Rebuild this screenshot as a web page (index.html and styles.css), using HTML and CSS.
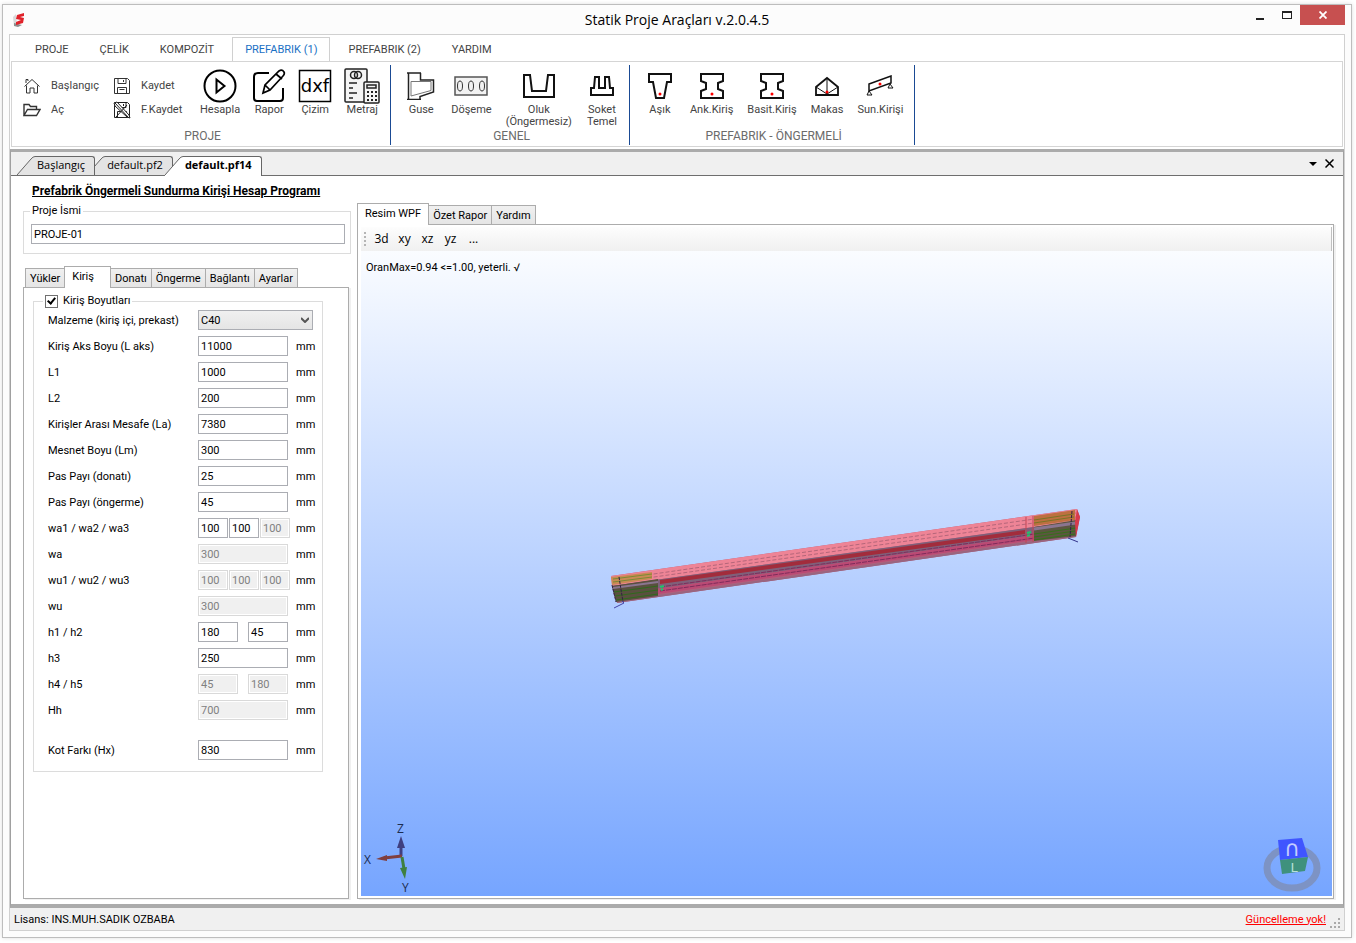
FILE: index.html
```html
<!DOCTYPE html>
<html lang="tr">
<head>
    <meta charset="UTF-8">
    <meta name="viewport" content="width=device-width, initial-scale=1.0">
    <title>Statik Proje Araçları v.2.0.4.5</title>
    <link rel="stylesheet" href="styles.css">
</head>
<body>
<div class="pencere">

    <!-- Başlık çubuğu -->
    <header class="baslik">
        <svg class="logo" width="16" height="16" viewBox="0 0 16 16">
            <path d="M1 5 L4 2 L5 13 L2 14 Z" fill="#d9d9d9"/>
            <path d="M2 11 L10 13 L6 15 L2 14 Z" fill="#8d8d8d"/>
            <path d="M12 1 L5 3 L4 7 L9 8 L4 10 L4 13 L11 11 L12 6 L8 5 L12 4 Z" fill="#e0222a"/>
        </svg>
        <h1>Statik Proje Araçları v.2.0.4.5</h1>
        <div class="pencere-dugmeleri">
            <button aria-label="Küçült"><svg width="10" height="10" viewBox="0 0 10 10"><path d="M1 8h8v2H1z" fill="#222"/></svg></button>
            <button aria-label="Ekranı kapla"><svg width="10" height="8" viewBox="0 0 10 8"><path d="M0 0h10v8H0zM1 2v5h8V2z" fill="#222" fill-rule="evenodd"/></svg></button>
            <button class="kapat" aria-label="Kapat"><svg width="8" height="8" viewBox="0 0 8 8"><path d="M.5.5l7 7M7.500.5l-7 7" stroke="#fff" stroke-width="1.800"/></svg></button>
        </div>
    </header>

    <div class="cerceve">

        <!-- Şerit menü -->
        <nav class="serit-sekmeler">
            <button>PROJE</button>
            <button>ÇELİK</button>
            <button>KOMPOZİT</button>
            <button class="aktif">PREFABRIK (1)</button>
            <button>PREFABRIK (2)</button>
            <button>YARDIM</button>
        </nav>

        <div class="serit">
            <section class="grup dar">
                <div class="grup-icerik">
                    <div class="kucukler">
                        <button>
                            <svg width="18" height="18" viewBox="0 0 18 18" fill="none" stroke="#333"><path d="M1.500 9.500L9 2.500l7.500 7M3.500 8.500v7.500h3.500v-5h4v5h3.500V8.500M3 6V2.500h2V4"/></svg>
                            Başlangıç
                        </button>
                        <button>
                            <svg width="18" height="18" viewBox="0 0 18 18" fill="none" stroke="#333"><path d="M1.500 1.500h13l2 2v13h-15zM5 1.500v5h8v-5M10.500 3v2M4.500 16.500v-6h9v6M6.500 12.500h5"/></svg>
                            Kaydet
                        </button>
                        <button>
                            <svg width="18" height="18" viewBox="0 0 18 18" fill="none" stroke="#333" stroke-width="1.400"><path d="M1 14.500V3.500h5l1.500 2h6V8M1 14.500L4.500 8.500H17l-3.500 6z"/></svg>
                            Aç
                        </button>
                        <button>
                            <svg width="18" height="18" viewBox="0 0 18 18" fill="none" stroke="#222"><path d="M1.500 1.500h13l2 2v13h-15zM5 1.500v5h8v-5M10.500 3v2M4.500 16.500v-6h9v6"/><path d="M1 2l3-1 12 13 1 3-3-1L2 5z" fill="#fff"/><path d="M2 2l13 14M3 16L14 4"/></svg>
                            F.Kaydet
                        </button>
                    </div>
                    <button class="buyuk">
                        <svg width="34" height="34" viewBox="0 0 34 34" fill="none" stroke="#000" stroke-width="2"><circle cx="17" cy="17" r="15.500"/><path d="M13.500 10.500v13l8-6.500z"/></svg>
                        <span>Hesapla</span>
                    </button>
                    <button class="buyuk">
                        <svg width="34" height="34" viewBox="0 0 34 34" fill="none" stroke="#000" stroke-width="2"><path d="M17 4H6Q2 4 2 8v21q0 3 3 3h23q3 0 3-3V19"/><path d="M11 24l2-8L27 2q3-2 5 1 1 2-1 4L18 21zM24 5l6 5M13 16l5 5" stroke-width="1.700"/></svg>
                        <span>Rapor</span>
                    </button>
                    <button class="buyuk">
                        <svg width="34" height="34" viewBox="0 0 34 34"><path d="M1.500 1.500h31v31h-31z" fill="#fff" stroke="#000" stroke-width="1.500"/><text x="17" y="23" class="dxf">dxf</text></svg>
                        <span>Çizim</span>
                    </button>
                    <button class="buyuk">
                        <svg width="36" height="36" viewBox="0 0 36 36" fill="none" stroke="#222" stroke-width="1.500"><rect x="1" y="1" width="22" height="33" rx="1" fill="#f4f4f4"/><circle cx="10" cy="7" r="3.500"/><circle cx="14" cy="7" r="3.500"/><path d="M5 15h8M5 20h4M5 25h8M5 30h4"/><rect x="20" y="14" width="15" height="21" rx="1" fill="#f4f4f4"/><rect x="23" y="17" width="9" height="3"/><path d="M23 24h10M23 28h10M23 32h10" stroke-dasharray="2 2" stroke-width="2"/></svg>
                        <span>Metraj</span>
                    </button>
                </div>
                <h2>PROJE</h2>
            </section>

            <section class="grup">
                <div class="grup-icerik">
                    <button class="buyuk">
                        <svg width="30" height="28" viewBox="0 0 30 28" fill="none" stroke="#222"><path d="M1 1h14M1 27.500h14M2.500 1v26.500M14.500 1v7h13v12L14 24.500v3" stroke-width="1.500"/><path d="M5 9.500h20v9L5 24z" stroke="#777"/></svg>
                        <span>Guse</span>
                    </button>
                    <button class="buyuk">
                        <svg width="34" height="20" viewBox="0 0 34 20" fill="none" stroke="#333"><rect x="1" y="1" width="32" height="18" fill="#f2f2f2" stroke="#555" stroke-width="1.500"/><ellipse cx="6" cy="10" rx="2.500" ry="5"/><ellipse cx="17" cy="10" rx="2.500" ry="5"/><ellipse cx="28" cy="10" rx="2.500" ry="5"/></svg>
                        <span>Döşeme</span>
                    </button>
                    <button class="buyuk">
                        <svg width="32" height="26" viewBox="0 0 32 26" fill="none" stroke="#111" stroke-width="2"><path d="M1 2h6l2 16h14l2-16h6v22H1z"/></svg>
                        <span>Oluk<br>(Öngermesiz)</span>
                    </button>
                    <button class="buyuk">
                        <svg width="26" height="22" viewBox="0 0 26 22" fill="none" stroke="#111" stroke-width="2"><path d="M2 20v-7h3l1-11h4v11h6V2h4l1 11h3v7z"/></svg>
                        <span>Soket<br>Temel</span>
                    </button>
                </div>
                <h2>GENEL</h2>
            </section>

            <section class="grup">
                <div class="grup-icerik">
                    <button class="buyuk">
                        <svg width="26" height="28" viewBox="0 0 26 28" fill="none" stroke="#111" stroke-width="2"><path d="M2 2h22v8h-4l-3 16H9L6 10H2z"/><circle cx="13" cy="22" r="1.500" fill="#f00" stroke="none"/></svg>
                        <span>Aşık</span>
                    </button>
                    <button class="buyuk">
                        <svg width="26" height="28" viewBox="0 0 26 28" fill="none" stroke="#111" stroke-width="2"><path d="M2 2h22v7l-5 2v6l5 2v7H2v-7l5-2v-6L2 9z"/><circle cx="13" cy="22" r="1.500" fill="#f00" stroke="none"/></svg>
                        <span>Ank.Kiriş</span>
                    </button>
                    <button class="buyuk">
                        <svg width="26" height="28" viewBox="0 0 26 28" fill="none" stroke="#111" stroke-width="2"><path d="M2 2h22v7l-5 2v6l5 2v7H2v-7l5-2v-6L2 9z"/><circle cx="13" cy="22" r="1.500" fill="#f00" stroke="none"/></svg>
                        <span>Basit.Kiriş</span>
                    </button>
                    <button class="buyuk">
                        <svg width="26" height="22" viewBox="0 0 26 22" fill="none" stroke="#111" stroke-width="1.800"><path d="M2 20V12L13 3l11 9v8z"/><path d="M13 3v16M2 12l11 7 11-7" stroke-width="1"/><circle cx="13" cy="17" r="1.500" fill="#f00" stroke="none"/></svg>
                        <span>Makas</span>
                    </button>
                    <button class="buyuk">
                        <svg width="28" height="22" viewBox="0 0 28 22" fill="none" stroke="#111" stroke-width="1.500"><path d="M3 9L25 1v7L3 16z"/><path d="M3 16l-2 4h5zM24 9l-2 4h5z" stroke-width="1"/><circle cx="14" cy="9" r="1.500" fill="#f00" stroke="none"/></svg>
                        <span>Sun.Kirişi</span>
                    </button>
                </div>
                <h2>PREFABRIK - ÖNGERMELİ</h2>
            </section>
        </div>

        <!-- Açık belgeler -->
        <div class="belge-alani">
            <div class="belge-sekmeler">
                <button class="belge b1"><svg width="18" height="19" viewBox="0 0 18 19"><path d="M0 19L14 3Q16 .5 18 .5V19z" fill="#e4e4e4"/><path d="M0 19L14 3Q16 .5 18 .5" fill="none" stroke="#666"/></svg><span>Başlangıç</span></button>
                <button class="belge"><svg width="18" height="19" viewBox="0 0 18 19"><path d="M0 19L14 3Q16 .5 18 .5V19z" fill="#e4e4e4"/><path d="M0 19L14 3Q16 .5 18 .5" fill="none" stroke="#666"/></svg><span>default.pf2</span></button>
                <button class="belge aktif"><svg width="18" height="20" viewBox="0 0 18 20"><path d="M0 20V19L14 3Q16 .5 18 .5V20z" fill="#fff"/><path d="M0 19L14 3Q16 .5 18 .5" fill="none" stroke="#666"/></svg><span>default.pf14</span></button>
                <div class="belge-dugmeleri">
                    <button aria-label="Belge listesi"><svg width="8" height="4" viewBox="0 0 8 4"><path d="M0 0h8L4 4z"/></svg></button>
                    <button aria-label="Belgeyi kapat"><svg width="9" height="9" viewBox="0 0 9 9"><path d="M.5.5l8 8M8.500.5l-8 8" stroke="#000" stroke-width="1.500"/></svg></button>
                </div>
            </div>

            <main class="belge-govde">
                <!-- Sol taraf: veri girişi -->
                <form class="sol">
                    <h2 class="program-adi">Prefabrik Öngermeli Sundurma Kirişi Hesap Programı</h2>
                    <fieldset class="proje">
                        <legend><label for="proje">Proje İsmi</label></legend>
                        <input type="text" id="proje" value="PROJE-01">
                    </fieldset>

                    <div class="sekmeler">
                        <button type="button">Yükler</button>
                        <button type="button" class="aktif">Kiriş</button>
                        <button type="button">Donatı</button>
                        <button type="button">Öngerme</button>
                        <button type="button">Bağlantı</button>
                        <button type="button">Ayarlar</button>
                    </div>
                    <div class="panel form-panel">
                        <fieldset class="boyutlar">
                            <legend><label><input type="checkbox" checked>Kiriş Boyutları</label></legend>
                            <div class="satir">
                                <label for="malzeme">Malzeme (kiriş içi, prekast)</label>
                                <div class="secim">
                                    <select id="malzeme"><option>C40</option></select>
                                    <svg width="8" height="6" viewBox="0 0 8 6"><path d="M0 1l4 4 4-4" fill="none" stroke="#555" stroke-width="2"/></svg>
                                </div>
                            </div>
                            <div class="satir"><label for="laks">Kiriş Aks Boyu (L aks)</label><div class="alanlar"><input type="text" id="laks" value="11000"></div><span>mm</span></div>
                            <div class="satir"><label for="l1">L1</label><div class="alanlar"><input type="text" id="l1" value="1000"></div><span>mm</span></div>
                            <div class="satir"><label for="l2">L2</label><div class="alanlar"><input type="text" id="l2" value="200"></div><span>mm</span></div>
                            <div class="satir"><label for="la">Kirişler Arası Mesafe (La)</label><div class="alanlar"><input type="text" id="la" value="7380"></div><span>mm</span></div>
                            <div class="satir"><label for="lm">Mesnet Boyu (Lm)</label><div class="alanlar"><input type="text" id="lm" value="300"></div><span>mm</span></div>
                            <div class="satir"><label for="pasd">Pas Payı (donatı)</label><div class="alanlar"><input type="text" id="pasd" value="25"></div><span>mm</span></div>
                            <div class="satir"><label for="paso">Pas Payı (öngerme)</label><div class="alanlar"><input type="text" id="paso" value="45"></div><span>mm</span></div>
                            <div class="satir"><label for="wa1">wa1 / wa2 / wa3</label><div class="alanlar uclu"><input type="text" id="wa1" value="100"><input type="text" aria-label="wa2" value="100"><input type="text" aria-label="wa3" value="100" disabled></div><span>mm</span></div>
                            <div class="satir"><label for="wa">wa</label><div class="alanlar"><input type="text" id="wa" value="300" disabled></div><span>mm</span></div>
                            <div class="satir"><label for="wu1">wu1 / wu2 / wu3</label><div class="alanlar uclu"><input type="text" id="wu1" value="100" disabled><input type="text" aria-label="wu2" value="100" disabled><input type="text" aria-label="wu3" value="100" disabled></div><span>mm</span></div>
                            <div class="satir"><label for="wu">wu</label><div class="alanlar"><input type="text" id="wu" value="300" disabled></div><span>mm</span></div>
                            <div class="satir"><label for="h1">h1 / h2</label><div class="alanlar ikili"><input type="text" id="h1" value="180"><input type="text" aria-label="h2" value="45"></div><span>mm</span></div>
                            <div class="satir"><label for="h3">h3</label><div class="alanlar"><input type="text" id="h3" value="250"></div><span>mm</span></div>
                            <div class="satir"><label for="h4">h4 / h5</label><div class="alanlar ikili"><input type="text" id="h4" value="45" disabled><input type="text" aria-label="h5" value="180" disabled></div><span>mm</span></div>
                            <div class="satir"><label for="hh">Hh</label><div class="alanlar"><input type="text" id="hh" value="700" disabled></div><span>mm</span></div>
                            <div class="satir ayrik"><label for="hx">Kot Farkı (Hx)</label><div class="alanlar"><input type="text" id="hx" value="830"></div><span>mm</span></div>
                        </fieldset>
                    </div>
                </form>

                <!-- Sağ taraf: 3d görünüm -->
                <section class="sag">
                    <div class="sekmeler">
                        <button class="aktif">Resim WPF</button>
                        <button>Özet Rapor</button>
                        <button>Yardım</button>
                    </div>
                    <div class="panel gorunum-panel">
                        <div class="araclar">
                            <i class="tutamac"></i>
                            <button>3d</button>
                            <button>xy</button>
                            <button>xz</button>
                            <button>yz</button>
                            <button>...</button>
                        </div>
                        <div class="gorunum">
                            <p>OranMax=0.94 &lt;=1.00, yeterli. √</p>
                            <svg class="kiris" width="494" height="120" viewBox="0 0 494 120">
                                <!-- üst yüz -->
                                <path d="M11 76L477 9l3 8-4 20L17 103z" fill="#b0607c"/>
                                <path d="M11 76L477 9v12L12 86z" fill="#ee8496"/>
                                <path d="M12 80L476 13M12 83L476 17" stroke="#b5667a" stroke-dasharray="4 2" fill="none"/>
                                <!-- gövde -->
                                <path d="M12 86L477 21v8L14 95z" fill="#80607a"/>
                                <path d="M60 80L425 30v4L60 84z" fill="#a22c3c"/>
                                <path d="M14 95L477 29l-1 5L16 100z" fill="#bb4a74"/>
                                <path d="M60 87L470 29M60 91L470 33" stroke="#7f2c5c" stroke-dasharray="5 1" fill="none"/>
                                <path d="M17 102L476 36" stroke="#9a6580" stroke-width="2"/>
                                <!-- sol uç donatısı -->
                                <path d="M11 77l41-5v7L12 85z" fill="#c98a55"/>
                                <path d="M13 79l39-5M13 82l39-5" stroke="#7c8a34"/>
                                <path d="M12 86l46-7v17l-42 6z" fill="#59503f"/>
                                <path d="M14 92l44-6M15 96l43-6M16 100l42-6" stroke="#2f6a1c"/>
                                <path d="M13 88l45-6" stroke="#8a7590" stroke-width="2"/>
                                <path d="M12 85l4 17M19 77l4 25" stroke="#322046" stroke-dasharray="3 1"/>
                                <path d="M60 87l4-1M61 90l2-1" stroke="#22c46c" stroke-width="2"/>
                                <path d="M14 108l10-5-2-2" stroke="#4343a8" fill="none"/>
                                <!-- sağ uç donatısı -->
                                <path d="M434 16l41-6v10l-41 6z" fill="#bd7040"/>
                                <path d="M434 20l40-6M434 23l40-6" stroke="#7a7426"/>
                                <path d="M434 27l42-7v16l-42 5z" fill="#5c5640"/>
                                <path d="M434 29l42-6" stroke="#8a7590" stroke-width="3"/>
                                <path d="M434 34l42-6M434 37l41-6M434 40l41-6" stroke="#35701a"/>
                                <path d="M426 17v26M433 16v26" stroke="#c24455"/>
                                <path d="M427 33l4-1M427 36l3-1" stroke="#22c46c" stroke-width="2"/>
                                <path d="M472 11l-2 26" stroke="#322046" stroke-dasharray="3 1"/>
                                <path d="M477 9l3 8-4 20-1-15z" fill="#d83a4c"/>
                                <path d="M468 38l10 4" stroke="#34348c"/>
                            </svg>
                            <div class="gorunum-alt">
                                <svg width="50" height="80" viewBox="-1 -6 50 80">
                                    <path d="M39 34V26" stroke="#3f3f80" stroke-width="3"/><path d="M39 14l4 12h-8z" fill="#3f3f80"/>
                                    <path d="M40 34l-18 2" stroke="#803f3f" stroke-width="3"/><path d="M14 37l11-4v6z" fill="#803f3f"/>
                                    <path d="M40 35l2 12" stroke="#3f803f" stroke-width="3"/><path d="M43 57l-5-11 7-1z" fill="#3f803f"/>
                                    <text x="35" y="11">Z</text><text x="2" y="42">X</text><text x="40" y="70">Y</text>
                                </svg>
                                <svg width="60" height="62" viewBox="0 0 60 62">
                                    <ellipse cx="30" cy="34" rx="25" ry="20" fill="none" stroke="#7d93c4" stroke-width="7"/>
                                    <path d="M16 6l24-2 6 19-28 3z" fill="#3f55ff"/>
                                    <path d="M18 26l28-3-3 14-23 3z" fill="#3f917d"/>
                                    <text x="30" y="22" class="kup">∩</text><text x="32" y="38" class="kup kup-l">L</text>
                                </svg>
                            </div>
                        </div>
                    </div>
                </section>
            </main>
        </div>

        <footer class="durum">
            <span>Lisans: INS.MUH.SADIK OZBABA</span>
            <a href="#">Güncelleme yok!</a>
            <svg width="12" height="12" viewBox="0 0 12 12" fill="#aaa"><path d="M8 0h2v2H8zM4 4h2v2H4zM8 4h2v2H8zM0 8h2v2H0zM4 8h2v2H4zM8 8h2v2H8z"/></svg>
        </footer>
    </div>
</div>
</body>
</html>
```
FILE: styles.css
```css
* {
    box-sizing: border-box;
}

body {
    margin: 0;
    padding: 4px 4px 5px 2px;
    min-height: 100vh;
    display: flex;
    background-color: #ffffff;
    color: #000000;
    font-family: Roboto, "Liberation Sans", sans-serif;
    font-size: 11px;
}

h1, h2, p {
    margin: 0;
    font-weight: normal;
}

button {
    margin: 0;
    padding: 0;
    border: none;
    background: none;
    color: inherit;
    font: inherit;
    cursor: pointer;
}

svg {
    flex: none;
    display: block;
}

.pencere {
    flex: 1;
    display: flex;
    flex-direction: column;
    padding: 0 6px 6px;
    border: 1px solid #bdbdbd;
    background-color: #fcfcfc;
    box-shadow: 0 0 4px #dddddd;
}

/* Başlık çubuğu */
.baslik {
    height: 29px;
    display: grid;
    grid-template-columns: 1fr auto 1fr;
    align-items: center;
}

.logo {
    margin-left: 3px;
}

.baslik h1 {
    font-family: "Open Sans", sans-serif;
    font-size: 14px;
}

.pencere-dugmeleri {
    align-self: start;
    justify-self: end;
    display: flex;
}

.pencere-dugmeleri button {
    width: 27px;
    height: 20px;
    display: flex;
    align-items: center;
    justify-content: center;
}

.pencere-dugmeleri .kapat {
    width: 45px;
    background-color: #c75050;
}

.cerceve {
    flex: 1;
    display: flex;
    flex-direction: column;
    border: 1px solid #d0d0d0;
    background-color: #ffffff;
}

/* Şerit menü */
.serit-sekmeler {
    display: flex;
    gap: 5px;
    padding: 2px 0 0 12px;
    color: #444444;
}

.serit-sekmeler button {
    height: 25px;
    margin-bottom: -1px;
    padding: 0 12px 2px;
    border: 1px solid transparent;
    border-bottom: none;
}

.serit-sekmeler .aktif {
    background-color: #ffffff;
    border-color: #d0d0d0;
    color: #1a70c4;
}

.serit {
    display: flex;
    margin: 0 1px 2px;
    padding: 3px 0 1px;
    border: 1px solid #d5d5d5;
    color: #444444;
    line-height: 12px;
}

.grup {
    padding: 2px 4px 0 7px;
    border-right: 1px solid #1a4a94;
}

.grup-icerik {
    display: flex;
    height: 62px;
}

.grup h2 {
    height: 16px;
    font-size: 12px;
    line-height: 14px;
    text-align: center;
    color: #6b6b6b;
}

.kucukler {
    display: grid;
    grid-template-columns: 90px 81px;
    grid-template-rows: 24px 24px;
    padding: 7px 0 0 4px;
}

.kucukler button {
    display: flex;
    align-items: center;
    gap: 10px;
}

.buyuk {
    display: flex;
    flex-direction: column;
    align-items: center;
    min-width: 46px;
    padding: 0 7px;
}

.dar .buyuk {
    padding: 0 6px;
}

.buyuk svg {
    margin: auto;
}

.buyuk span {
    height: 25px;
}

.dxf {
    font-family: "DejaVu Sans", sans-serif;
    font-size: 18px;
    text-anchor: middle;
}

/* Açık belgeler */
.belge-alani {
    flex: 1;
    display: flex;
    flex-direction: column;
    border: 1px solid #a0a0a0;
    border-top: 3px solid #ababab;
    border-bottom: 4px solid #ababab;
}

.belge-sekmeler {
    display: flex;
    align-items: flex-end;
    height: 24px;
    padding-left: 6px;
    background-color: #f0f0f0;
    border-bottom: 1px solid #6e6e6e;
    font-family: "Open Sans", sans-serif;
    font-size: 11px;
}

.belge {
    display: flex;
    margin-left: -8px;
    position: relative;
}

.belge span {
    height: 19px;
    padding: 0 9px 0 2px;
    background-color: #e4e4e4;
    border: 1px solid #666666;
    border-width: 1px 1px 0 0;
    border-top-right-radius: 3px;
    line-height: 16px;
}

.b1 {
    margin-left: 0;
    z-index: 1;
}

.belge.aktif {
    z-index: 2;
    margin-bottom: -1px;
    font-weight: bold;
}

.belge.aktif span {
    height: 20px;
    background-color: #ffffff;
}

.belge-dugmeleri {
    margin: 0 9px 0 auto;
    align-self: center;
    display: flex;
    align-items: center;
    gap: 8px;
}

.belge-govde {
    flex: 1;
    display: flex;
    gap: 8px;
    padding: 8px 9px 5px 12px;
}

/* Veri girişi */
.sol {
    width: 326px;
    display: flex;
    flex-direction: column;
}

.program-adi {
    padding-left: 9px;
    font-size: 12px;
    font-weight: bold;
    line-height: 14px;
    text-decoration: underline;
    white-space: nowrap;
}

fieldset {
    margin: 0;
    min-width: 0;
    border: 1px solid #dcdcdc;
}

legend {
    padding: 0 2px;
    line-height: 14px;
}

input[type="text"], select {
    height: 20px;
    margin: 0;
    padding: 0 2px;
    border: 1px solid #abadb3;
    border-radius: 0;
    background-color: #ffffff;
    color: #000000;
    font: inherit;
}

input[type="text"]:disabled {
    border-color: #d9d9d9;
    background-color: #f0f0f0;
    box-shadow: inset 0 0 0 1px #ffffff;
    color: #808080;
}

.proje {
    margin: 6px -2px 0 0;
    padding: 6px 5px 9px 7px;
}

.proje legend {
    margin-left: -1px;
}

.proje input {
    display: block;
    width: 100%;
}

.sekmeler {
    display: flex;
    align-items: flex-end;
    height: 21px;
    padding-left: 2px;
}

.sol .sekmeler {
    margin-top: 12px;
}

.sekmeler button {
    height: 19px;
    margin-right: -1px;
    padding: 0 4px;
    border: 1px solid #acacac;
    border-bottom: none;
    background: linear-gradient(#f0f0f0, #e5e5e5);
}

.sekmeler .aktif {
    height: 22px;
    margin-bottom: -1px;
    padding: 0 16px 3px 7px;
    background: #ffffff;
    z-index: 1;
}

.panel {
    flex: 1;
    border: 1px solid #acacac;
    box-shadow: 2px 1px 0 #f0f0f0;
}

.form-panel {
    padding: 7px 25px 10px 9px;
}

.boyutlar {
    padding: 0 9px 8px 14px;
}

.boyutlar legend {
    margin-left: -5px;
    line-height: 12px;
}

.boyutlar legend label {
    display: flex;
    align-items: center;
    height: 12px;
    gap: 5px;
}

input[type="checkbox"] {
    appearance: none;
    display: grid;
    place-content: center;
    width: 13px;
    height: 13px;
    margin: 0;
    border: 1px solid #707070;
}

input[type="checkbox"]:checked::before {
    content: "";
    width: 3px;
    height: 6px;
    margin-bottom: 2px;
    border: solid #000000;
    border-width: 0 2px 2px 0;
    transform: rotate(40deg);
}

.satir {
    display: flex;
    align-items: center;
    height: 26px;
}

.satir > label {
    flex: none;
    width: 150px;
}

.ayrik {
    margin-top: 14px;
}

.alanlar {
    flex: none;
    display: flex;
    width: 92px;
    margin-right: 6px;
}

.alanlar input {
    width: 90px;
}

.uclu {
    gap: 1px;
}

.uclu input {
    width: 30px;
}

.ikili {
    gap: 10px;
}

.ikili input {
    width: 40px;
}

.secim {
    display: grid;
    width: 115px;
    align-items: center;
}

.secim select, .secim svg {
    grid-area: 1 / 1;
}

.secim select {
    appearance: none;
    background: linear-gradient(#f0f0f0, #e5e5e5);
}

.secim svg {
    justify-self: end;
    margin-right: 4px;
    pointer-events: none;
}

/* Görünüm */
.sag {
    flex: 1;
    display: flex;
    flex-direction: column;
    padding-top: 19px;
}

.sag .sekmeler {
    padding-left: 0;
}

.sag .aktif {
    padding: 0 7px 2px;
}

.gorunum-panel {
    display: flex;
    flex-direction: column;
    padding: 2px 1px 2px 3px;
}

.araclar {
    display: flex;
    align-items: center;
    height: 24px;
    padding-left: 3px;
    background: linear-gradient(#fdfdfd, #f0f0f0);
    border-right: 1px solid #c0c0c0;
    font-family: "Open Sans", sans-serif;
    font-size: 12px;
    line-height: 14px;
}

.araclar button {
    width: 23px;
}

.tutamac {
    width: 2px;
    height: 14px;
    margin-right: 4px;
    background: repeating-linear-gradient(#b5b5b5 0 2px, transparent 2px 4px);
}

.gorunum {
    flex: 1;
    display: flex;
    flex-direction: column;
    background: linear-gradient(#fafcff, #76a5ff);
}

.gorunum p {
    height: 52px;
    padding: 10px 0 0 5px;
    line-height: 14px;
}

.kiris {
    margin: auto;
}

.gorunum-alt {
    display: flex;
    align-items: flex-end;
    justify-content: space-between;
    padding-right: 10px;
}

.gorunum-alt text {
    font-family: "Open Sans", sans-serif;
    font-size: 12px;
    fill: #1c2c50;
}

.gorunum-alt .kup {
    font-family: "DejaVu Sans", sans-serif;
    font-size: 22px;
    text-anchor: middle;
    fill: #c3ccff;
}

.gorunum-alt .kup-l {
    font-size: 13px;
    fill: #b8e0d8;
}

/* Durum çubuğu */
.durum {
    display: flex;
    align-items: center;
    height: 22px;
    padding: 0 2px 0 4px;
    background-color: #f0f0f0;
}

.durum a {
    margin: 0 4px 0 auto;
    color: #ff0000;
}

.durum svg {
    align-self: flex-end;
}
```
